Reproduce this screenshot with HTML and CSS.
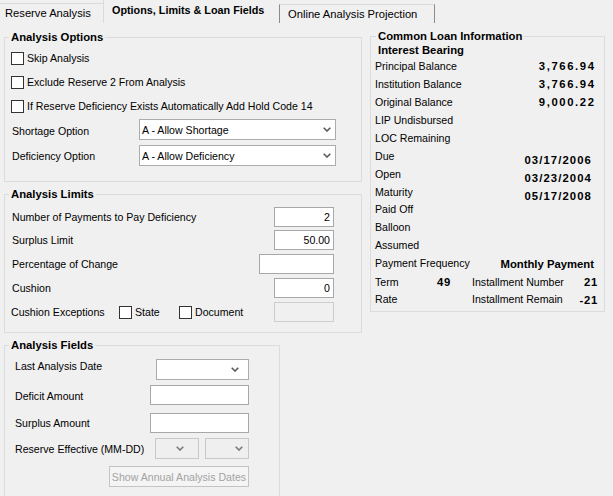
FILE: index.html
```html
<!DOCTYPE html>
<html>
<head>
<meta charset="utf-8">
<link rel="stylesheet" href="styles.css">
</head>
<body>
<div class="tabs">
  <div class="tab tab-first">Reserve Analysis</div>
  <div class="tab tab-active">Options, Limits &amp; Loan Fields</div>
  <div class="tab tab-last">Online Analysis Projection</div>
</div>
<div class="page">
  <div class="left">
    <section class="group g-options">
      <div class="group-title">Analysis Options</div>
      <div class="row cb-row first-cb"><span class="cb"></span><span>Skip Analysis</span></div>
      <div class="row cb-row"><span class="cb"></span><span>Exclude Reserve 2 From Analysis</span></div>
      <div class="row cb-row"><span class="cb"></span><span>If Reserve Deficiency Exists Automatically Add Hold Code 14</span></div>
      <div class="row opt-row opt-1"><span class="opt-label lab-low">Shortage Option</span><div class="combo combo-wide"><span class="combo-text">A - Allow Shortage</span><svg class="chev" width="8" height="5" viewBox="0 0 8 5"><path d="M0.7 0.7 L4 4 L7.3 0.7" stroke="#5a5a5a" stroke-width="1.6" fill="none"/></svg></div></div>
      <div class="row opt-row opt-2"><span class="opt-label">Deficiency Option</span><div class="combo combo-wide"><span class="combo-text">A - Allow Deficiency</span><svg class="chev" width="8" height="5" viewBox="0 0 8 5"><path d="M0.7 0.7 L4 4 L7.3 0.7" stroke="#5a5a5a" stroke-width="1.6" fill="none"/></svg></div></div>
    </section>

    <section class="group g-limits">
      <div class="group-title">Analysis Limits</div>
      <div class="row lim-row lim-1"><span class="lim-label">Number of Payments to Pay Deficiency</span><div class="tbox tbox-s">2</div></div>
      <div class="row lim-row lim-2"><span class="lim-label">Surplus Limit</span><div class="tbox tbox-s">50.00</div></div>
      <div class="row lim-row lim-3"><span class="lim-label">Percentage of Change</span><div class="tbox tbox-m"></div></div>
      <div class="row lim-row lim-3"><span class="lim-label">Cushion</span><div class="tbox tbox-s">0</div></div>
      <div class="row lim-row lim-3">
        <span class="cush-label">Cushion Exceptions</span>
        <span class="cush-item cush-state"><span class="cb"></span><span>State</span></span>
        <span class="cush-item"><span class="cb"></span><span>Document</span></span>
        <div class="tbox tbox-s tbox-disabled"></div>
      </div>
    </section>

    <section class="group g-fields">
      <div class="group-title">Analysis Fields</div>
      <div class="row f-row f-1"><span class="f-label f-label-up">Last Analysis Date</span><div class="combo combo-date"><svg class="chev" width="8" height="5" viewBox="0 0 8 5"><path d="M0.7 0.7 L4 4 L7.3 0.7" stroke="#5a5a5a" stroke-width="1.6" fill="none"/></svg></div></div>
      <div class="row f-row f-2"><span class="f-label f-label-down">Deficit Amount</span><div class="tbox tbox-l"></div></div>
      <div class="row f-row f-3"><span class="f-label">Surplus Amount</span><div class="tbox tbox-l"></div></div>
      <div class="row f-row f-4"><span class="f-label">Reserve Effective (MM-DD)</span>
        <div class="combo combo-dis combo-dis-1"><svg class="chev" width="8" height="5" viewBox="0 0 8 5"><path d="M0.7 0.7 L4 4 L7.3 0.7" stroke="#7a7a7a" stroke-width="1.6" fill="none"/></svg></div>
        <div class="combo combo-dis combo-dis-2"><svg class="chev" width="8" height="5" viewBox="0 0 8 5"><path d="M0.7 0.7 L4 4 L7.3 0.7" stroke="#7a7a7a" stroke-width="1.6" fill="none"/></svg></div>
      </div>
      <div class="row f-row f-5"><button class="btn-dis" disabled>Show Annual Analysis Dates</button></div>
    </section>
  </div>

  <section class="group g-loan">
    <div class="group-title loan-title">Common Loan Information<br>Interest Bearing</div>
    <div class="lrow"><span>Principal Balance</span><span class="val val-money">3,766.94</span></div>
    <div class="lrow"><span>Institution Balance</span><span class="val val-money">3,766.94</span></div>
    <div class="lrow"><span>Original Balance</span><span class="val val-money">9,000.22</span></div>
    <div class="lrow"><span>LIP Undisbursed</span></div>
    <div class="lrow"><span>LOC Remaining</span></div>
    <div class="lrow"><span>Due</span><span class="val val-date">03/17/2006</span></div>
    <div class="lrow"><span>Open</span><span class="val val-date">03/23/2004</span></div>
    <div class="lrow"><span>Maturity</span><span class="val val-date">05/17/2008</span></div>
    <div class="lrow"><span class="lab-up">Paid Off</span></div>
    <div class="lrow"><span class="lab-up">Balloon</span></div>
    <div class="lrow"><span class="lab-up">Assumed</span></div>
    <div class="lrow"><span class="lab-up">Payment Frequency</span><span class="val val-text">Monthly Payment</span></div>
    <div class="lrow"><span class="term-lab">Term</span><span class="val val-small term-val">49</span><span class="inst-lab">Installment Number</span><span class="val val-small inst-val">21</span></div>
    <div class="lrow"><span class="term-lab lab-up">Rate</span><span class="term-val"></span><span class="inst-lab lab-up">Installment Remain</span><span class="val val-small inst-val">-21</span></div>
  </section>
</div>
</body>
</html>
```

FILE: styles.css
```css
* { box-sizing: border-box; }
html, body { margin: 0; padding: 0; }
body {
  width: 613px;
  height: 496px;
  overflow: hidden;
  background: #f0f0f0;
  font-family: "Liberation Sans", Arial, sans-serif;
  font-size: 10.6px;
  color: #000;
}

/* tabs */
.tabs { display: flex; align-items: flex-start; height: 23px; }
.tab {
  margin-top: 3px;
  height: 20px;
  line-height: 19px;
  border-top: 1px solid #dadada;
  white-space: nowrap;
  font-size: 11.2px;
}
.tab-first { width: 103px; padding-left: 5px; }
.tab-active {
  margin-top: 0;
  height: 23px;
  width: 176px;
  line-height: 20px;
  padding-left: 8px;
  border-top: none;
  border-left: 1px solid #dadada;
  font-weight: bold;
  font-size: 10.8px;
}
.tab-last {
  width: 156px;
  padding-left: 8px;
  height: 19px;
  line-height: 18px;
  margin-top: 4px;
  border-left: 1px solid #8c8c8c;
  border-right: 1px solid #8c8c8c;
}

/* page */
.page { display: flex; align-items: flex-start; padding-left: 4px; gap: 8px; }
.left { width: 358px; display: flex; flex-direction: column; }

.group { border: 1px solid #dcdcdc; padding: 0 6px; }
.group-title {
  display: block;
  width: fit-content;
  height: 14px;
  line-height: 14px;
  margin-top: -8px;
  margin-left: -2px;
  padding: 0 2px;
  background: #f0f0f0;
  font-weight: bold;
  font-size: 11.3px;
  white-space: nowrap;
}
.row { display: flex; align-items: center; white-space: nowrap; }

.g-options { margin-top: 14px; height: 145px; }
.g-limits { margin-top: 12px; height: 139px; padding-right: 27px; }
.g-fields { margin-top: 12px; width: 276px; height: 200px; padding-right: 30px; }

/* checkboxes */
.cb {
  display: inline-block;
  width: 13px;
  height: 13px;
  border: 1px solid #333;
  background: #fff;
  margin-right: 3px;
  flex: none;
}
.cb-row { height: 24px; }
.first-cb { margin-top: 2px; }

/* option combos */
.opt-row { height: 21px; }
.opt-1 { margin-top: 1px; }
.opt-2 { margin-top: 5px; }
.opt-label { width: 128px; padding-left: 1px; }
.lab-low { padding-top: 3px; }
.combo {
  display: flex;
  align-items: center;
  height: 21px;
  background: #fff;
  border: 1px solid #acacac;
}
.combo-wide { width: 197px; padding-left: 2px; padding-right: 4px; }
.combo-text { flex: 1; }
.chev { display: block; flex: none; margin-left: auto; }

/* limits */
.lim-row { height: 20px; }
.lim-1 { margin-top: 6px; }
.lim-2 { margin-top: 3px; }
.lim-3 { margin-top: 4px; }
.lim-label { padding-left: 1px; }
.tbox {
  height: 20px;
  margin-left: auto;
  background: #fff;
  border: 1px solid #a8a8a8;
  text-align: right;
  padding-right: 3px;
  line-height: 18px;
}
.tbox-s { width: 60px; }
.tbox-m { width: 75px; }
.tbox-l { width: 99px; }
.tbox-disabled { background: #f0f0f0; border-color: #cdcdcd; }
.cush-label { width: 108px; }
.cush-item { display: flex; align-items: center; }
.cush-state { width: 60px; }

/* fields */
.f-row { height: 21px; }
.f-1 { margin-top: 7px; }
.f-2 { margin-top: 5px; height: 20px; }
.f-3 { margin-top: 8px; height: 20px; }
.f-4 { margin-top: 5px; }
.f-5 { margin-top: 7px; }
.f-label { padding-left: 4px; }
.f-label-up { margin-bottom: 7px; }
.f-label-down { padding-top: 2px; }
.combo-date { width: 93px; margin-left: auto; padding-right: 9px; }
.combo-dis { width: 44px; background: #efefef; border-color: #c8c8c8; }
.combo-dis-1 { margin-left: auto; padding-right: 14px; }
.combo-dis-2 { margin-left: 6px; padding-right: 5px; }
.btn-dis {
  margin-left: auto;
  width: 140px;
  height: 21px;
  padding: 0;
  background: #f4f4f4;
  border: 1px solid #c4c4c4;
  border-radius: 0;
  color: #a3a3a3;
  font-family: "Liberation Sans", Arial, sans-serif;
  font-size: 10.6px;
}

/* loan info */
.g-loan {
  margin-top: 13px;
  width: 235px;
  height: 276px;
  padding-left: 4px;
  padding-right: 10px;
}
.loan-title { height: 28px; margin-left: 1px; }
.lrow { display: flex; align-items: center; height: 18px; white-space: nowrap; }
.lab-up { margin-bottom: 2px; }
.val { font-weight: bold; font-size: 11.3px; margin-left: auto; }
.val-money { letter-spacing: 1.6px; margin-right: -1.6px; }
.val-date { letter-spacing: 1.1px; margin-right: 2px; margin-top: 7px; }
.val-text { margin-right: 0; }
.val-small { letter-spacing: 0.7px; }
.term-lab { width: 60px; }
.term-val { width: 16px; margin-left: 0; text-align: right; }
.inst-lab { margin-left: 21px; }
.inst-val { margin-right: -4px; }
```
